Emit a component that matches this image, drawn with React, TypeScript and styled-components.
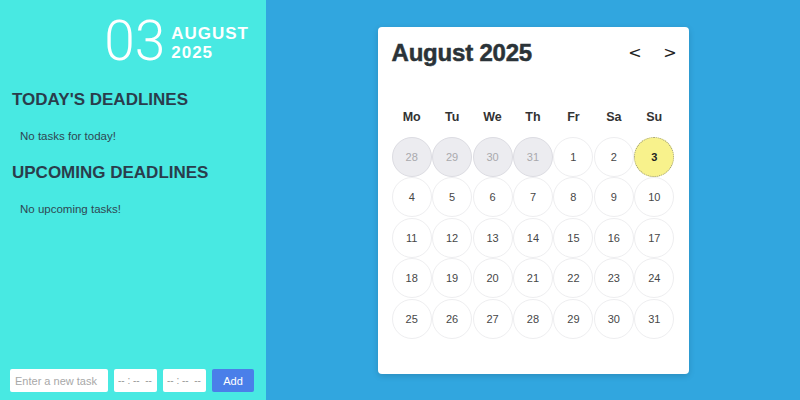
import React from "react";
import styled, { createGlobalStyle } from "styled-components";

const Global = createGlobalStyle`
  html, body { margin: 0; padding: 0; }
  body { font-family: "Liberation Sans", Arial, sans-serif; }
  * { box-sizing: border-box; }
`;

const Page = styled.div`
  display: flex;
  width: 800px;
  height: 400px;
  overflow: hidden;
`;

const Sidebar = styled.aside`
  width: 266px;
  flex-shrink: 0;
  background: #48e9e2;
  display: flex;
  flex-direction: column;
  padding: 0 12px 8px 10px;
`;

const DateHead = styled.div`
  display: flex;
  justify-content: flex-end;
  align-items: center;
  gap: 6px;
  padding: 10px 5px 0 0;
  height: 72px;
`;

const DayNum = styled.div`
  font-family: Roboto, "Liberation Sans", sans-serif;
  font-weight: 300;
  font-size: 55px;
  line-height: 56px;
  color: #fff;
`;

const MonthYear = styled.div`
  display: flex;
  flex-direction: column;
  color: #fff;
  font-weight: bold;
  font-size: 17px;
  letter-spacing: 1px;
  line-height: 19px;
  padding-top: 4px;
`;

const SectionTitle = styled.h2`
  margin: 0;
  font-size: 17px;
  font-weight: bold;
  color: #2a3d4c;
  line-height: 22px;
  padding-left: 2px;
`;

const Empty = styled.p`
  margin: 0;
  font-size: 11.5px;
  color: #2f4752;
  padding-left: 10px;
  line-height: 16px;
`;

const Section = styled.div<{ $top: number }>`
  display: flex;
  flex-direction: column;
  gap: 17px;
  margin-top: ${(p) => p.$top}px;
`;

const Form = styled.form`
  margin-top: auto;
  display: flex;
  gap: 6px;
  align-items: center;
`;

const TaskInput = styled.input`
  width: 98px;
  height: 23px;
  border: none;
  border-radius: 2px;
  background: #fff;
  font-family: "Liberation Sans", Arial, sans-serif;
  font-size: 11px;
  padding: 0 5px;
  outline: none;
  &::placeholder { color: #a8a8a8; }
`;

const TimeInput = styled(TaskInput)`
  width: 43px;
  padding: 0 4px;
  font-size: 10px;
  &::placeholder { color: #999; }
`;

const AddButton = styled.button`
  width: 43px;
  height: 23px;
  border: none;
  border-radius: 2px;
  background: #4a7fe9;
  color: #fff;
  font-family: "Liberation Sans", Arial, sans-serif;
  font-size: 11px;
  padding: 0;
`;

const Main = styled.main`
  flex: 1;
  background: #31a6df;
  display: flex;
  align-items: center;
  justify-content: center;
`;

const Card = styled.div`
  width: 311px;
  height: 347px;
  background: #fff;
  border-radius: 4px;
  box-shadow: 0 2px 6px rgba(0, 0, 0, 0.15);
  padding: 12px 14px 14px 14px;
  display: flex;
  flex-direction: column;
`;

const CardHeader = styled.div`
  display: flex;
  align-items: center;
  justify-content: space-between;
  height: 28px;
`;

const Title = styled.h1`
  margin: 0;
  font-size: 24px;
  font-weight: 900;
  color: #2b3338;
  letter-spacing: -0.2px;
  -webkit-text-stroke: 0.5px #2b3338;
`;

const Nav = styled.div`
  display: flex;
  gap: 20px;
  margin-right: -3px;
`;

const NavButton = styled.button`
  border: none;
  background: none;
  padding: 0;
  font-family: "DejaVu Sans", sans-serif;
  font-size: 16px;
  color: #222;
  width: 15px;
`;

const Grid = styled.div`
  display: grid;
  grid-template-columns: repeat(7, 1fr);
  width: 283px;
`;

const WeekRow = styled(Grid)`
  margin-top: 40px;
  height: 20px;
  align-items: center;
`;

const WeekDay = styled.div`
  text-align: center;
  font-size: 12.5px;
  font-weight: bold;
  color: #333;
`;

const DaysGrid = styled(Grid)`
  margin-top: 10px;
  grid-auto-rows: 40.5px;
`;

const Day = styled.div<{ $kind: "prev" | "cur" | "today" }>`
  width: 40px;
  height: 40px;
  justify-self: center;
  align-self: center;
  border-radius: 50%;
  display: flex;
  align-items: center;
  justify-content: center;
  font-size: 11px;
  border: 1px ${(p) => (p.$kind === "today" ? "dotted #9a9a7a" : "solid")}
    ${(p) => (p.$kind === "prev" ? "#dcdce2" : p.$kind === "cur" ? "#eeeef0" : "")};
  background: ${(p) =>
    p.$kind === "prev" ? "#ececf0" : p.$kind === "today" ? "#f8f28c" : "#fff"};
  color: ${(p) => (p.$kind === "prev" ? "#a9a9ad" : p.$kind === "today" ? "#222" : "#474747")};
  font-weight: ${(p) => (p.$kind === "today" ? "bold" : "normal")};
`;

const weekdays = ["Mo", "Tu", "We", "Th", "Fr", "Sa", "Su"];

const days: { n: number; kind: "prev" | "cur" | "today" }[] = [
  ...[28, 29, 30, 31].map((n) => ({ n, kind: "prev" as const })),
  ...Array.from({ length: 31 }, (_, i) => ({
    n: i + 1,
    kind: (i + 1 === 3 ? "today" : "cur") as "today" | "cur",
  })),
];

export default function App() {
  return (
    <Page>
      <Global />
      <Sidebar>
        <DateHead>
          <DayNum>03</DayNum>
          <MonthYear>
            <span>AUGUST</span>
            <span>2025</span>
          </MonthYear>
        </DateHead>
        <Section $top={17}>
          <SectionTitle>TODAY'S DEADLINES</SectionTitle>
          <Empty>No tasks for today!</Empty>
        </Section>
        <Section $top={18}>
          <SectionTitle>UPCOMING DEADLINES</SectionTitle>
          <Empty>No upcoming tasks!</Empty>
        </Section>
        <Form onSubmit={(e) => e.preventDefault()}>
          <TaskInput placeholder="Enter a new task" />
          <TimeInput placeholder="-- : --  --" />
          <TimeInput placeholder="-- : --  --" />
          <AddButton type="submit">Add</AddButton>
        </Form>
      </Sidebar>
      <Main>
        <Card>
          <CardHeader>
            <Title>August 2025</Title>
            <Nav>
              <NavButton>&lt;</NavButton>
              <NavButton>&gt;</NavButton>
            </Nav>
          </CardHeader>
          <WeekRow>
            {weekdays.map((w) => (
              <WeekDay key={w}>{w}</WeekDay>
            ))}
          </WeekRow>
          <DaysGrid>
            {days.map((d, i) => (
              <Day key={i} $kind={d.kind}>
                {d.n}
              </Day>
            ))}
          </DaysGrid>
        </Card>
      </Main>
    </Page>
  );
}
